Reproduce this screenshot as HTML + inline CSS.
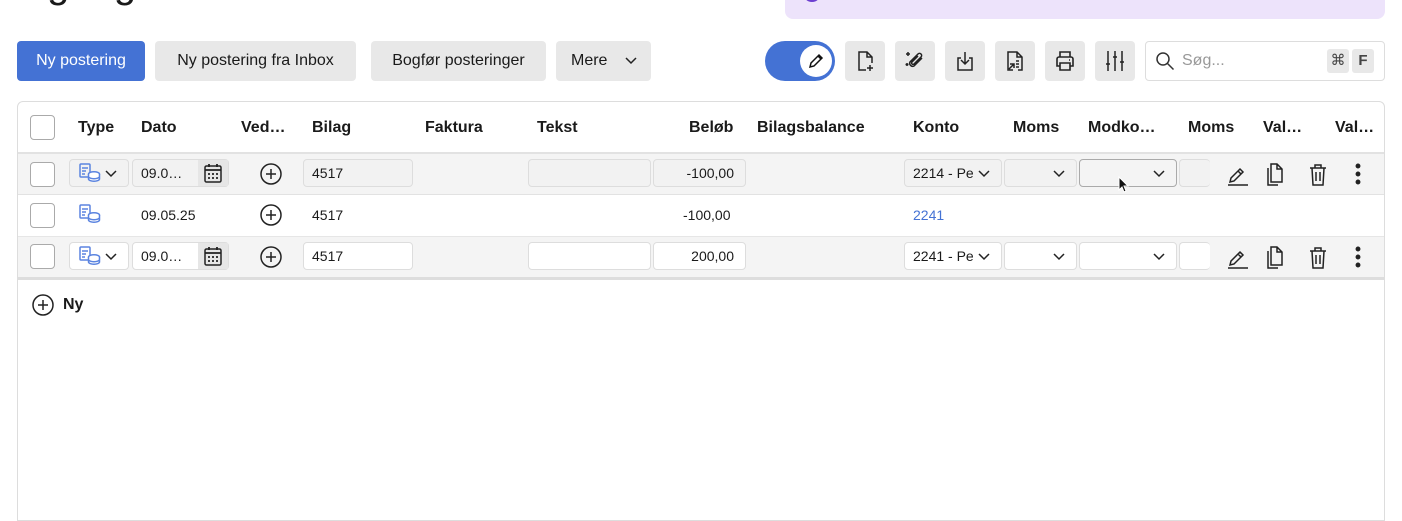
<!DOCTYPE html><html><head><meta charset="utf-8"><style>
*{box-sizing:border-box;margin:0;padding:0}
body{width:1402px;height:510px;background:#fff;font-family:"Liberation Sans",sans-serif;color:#1a1a1a;position:relative;overflow:hidden}
.a{position:absolute}
.btn{position:absolute;top:41px;height:40px;border-radius:4px;background:#e8e8e8;font-size:16px;line-height:40px;text-align:center;color:#1a1a1a}
.ib{position:absolute;top:41px;width:40px;height:40px;border-radius:4px;background:#e8e8e8}
.ib svg{position:absolute;left:8px;top:8px}
.th{position:absolute;top:119px;font-size:16px;font-weight:bold}
.in{position:absolute;height:28px;border:1px solid #ddd;border-radius:4px;font-size:14px;line-height:26px;padding-left:8px;background:#fff}
.r1 .in{background:#f2f2f2}
.cb{position:absolute;left:30px;width:25px;height:25px;border:1px solid #aaa;border-radius:4px;background:#fff}
.td{position:absolute;font-size:14px}
</style></head><body>
<div class="a" style="left:-4px;top:-38px;font-size:40px">Dagbog</div>
<div class="a" style="left:785px;top:-10px;width:600px;height:29px;background:#ede3fb;border-radius:8px"></div>
<div class="a" style="left:803px;top:-8px;width:18px;height:10px;background:#6c3fd0;border-radius:0 0 9px 9px"></div>

<div class="btn" style="left:17px;width:128px;background:#4472d4;color:#fff">Ny postering</div>
<div class="btn" style="left:155px;width:201px">Ny postering fra Inbox</div>
<div class="btn" style="left:371px;width:175px">Bogfør posteringer</div>
<div class="btn" style="left:556px;width:95px;text-align:left;padding-left:15px">Mere<svg class="a" style="left:68px;top:15px" width="14" height="10" viewBox="0 0 14 10"><path d="M2 2l5 5 5-5" fill="none" stroke="#222" stroke-width="1.5"/></svg></div>

<div class="a" style="left:765px;top:41px;width:70px;height:40px;border-radius:20px;background:#4472d4"></div>
<div class="a" style="left:800px;top:45px;width:32px;height:32px;border-radius:16px;background:#fff"></div>
<svg class="a" style="left:806px;top:51px" width="20" height="20" viewBox="0 0 20 20"><path d="M4 16l1-4 8-8 3 3-8 8z M12 5l3 3" fill="none" stroke="#111" stroke-width="1.5"/></svg>

<div class="ib" style="left:845px"><svg width="24" height="24" viewBox="0 0 24 24" fill="none" stroke="#222" stroke-width="1.5"><path d="M13 21H6V3h8l5 5v6M14 3v5h5M17 16v6M14 19h6"/></svg></div>
<div class="ib" style="left:895px"><svg width="24" height="24" viewBox="0 0 24 24" fill="none" stroke="#222" stroke-width="1.5"><path d="M19 9l-8 8a3 3 0 01-4-4l8-8a2 2 0 013 3l-7 7a1 1 0 01-2-2l6-6M5 3v4M3 5h4M4 14v3M2.5 15.5h3"/></svg></div>
<div class="ib" style="left:945px"><svg width="24" height="24" viewBox="0 0 24 24" fill="none" stroke="#222" stroke-width="1.5"><path d="M8 9H5v12h14V9h-3M12 3v12M8 11l4 4 4-4"/></svg></div>
<div class="ib" style="left:995px"><svg width="24" height="24" viewBox="0 0 24 24" fill="none" stroke="#222" stroke-width="1.5"><path d="M10 21H5V3h9l5 5v13h-4M14 3v5h5M13 12h3M13 15h3M13 18h3M6 20l5-5M7 15h4v4"/></svg></div>
<div class="ib" style="left:1045px"><svg width="24" height="24" viewBox="0 0 24 24" fill="none" stroke="#222" stroke-width="1.6"><path d="M7 8V3h10v5M7 17H4V10a2 2 0 012-2h12a2 2 0 012 2v7h-3M7 14h10v7H7zM16 11h1"/></svg></div>
<div class="ib" style="left:1095px"><svg width="24" height="24" viewBox="0 0 24 24" fill="none" stroke="#222" stroke-width="1.5"><path d="M5 2v20M12 2v20M19 2v20M3 15h4M10 8h4M17 13h4"/></svg></div>

<div class="a" style="left:1145px;top:41px;width:240px;height:40px;border:1px solid #ddd;border-radius:4px"></div>
<svg class="a" style="left:1155px;top:51px" width="20" height="20" viewBox="0 0 20 20"><circle cx="8" cy="8" r="6" fill="none" stroke="#333" stroke-width="1.5"/><path d="M12.5 12.5l6 6" stroke="#333" stroke-width="1.5"/></svg>
<div class="a" style="left:1182px;top:52px;font-size:16px;color:#999">Søg...</div>
<div class="a" style="left:1327px;top:49px;width:22px;height:24px;background:#e8e8e8;border-radius:3px;font-size:15px;line-height:24px;text-align:center;color:#444">⌘</div>
<div class="a" style="left:1352px;top:49px;width:22px;height:24px;background:#e8e8e8;border-radius:3px;font-size:15px;font-weight:bold;line-height:24px;text-align:center;color:#444">F</div>

<div class="a" style="left:17px;top:101px;width:1368px;height:420px;border:1px solid #ddd;border-radius:6px 6px 0 0"></div>
<div class="cb" style="top:115px"></div>
<div class="th" style="left:78px">Type</div><div class="th" style="left:141px">Dato</div><div class="th" style="left:241px">Ved…</div><div class="th" style="left:312px">Bilag</div><div class="th" style="left:425px">Faktura</div><div class="th" style="left:537px">Tekst</div><div class="th" style="left:689px">Beløb</div><div class="th" style="left:757px">Bilagsbalance</div><div class="th" style="left:913px">Konto</div><div class="th" style="left:1013px">Moms</div><div class="th" style="left:1088px">Modko…</div><div class="th" style="left:1188px">Moms</div><div class="th" style="left:1263px">Val…</div><div class="th" style="left:1335px">Val…</div>

<div class="a" style="left:18px;top:152px;width:1366px;height:43px;background:#f4f4f4;border-top:2px solid #e2e2e2;border-bottom:1px solid #e2e2e2"></div>
<div class="a" style="left:18px;top:236px;width:1366px;height:44px;background:#f4f4f4;border-top:1px solid #e6e6e6;border-bottom:3px solid #ddd"></div>

<div class="r1">
<div class="cb" style="top:162px"></div>
<div class="in" style="left:69px;top:159px;width:60px"></div>
<div class="in" style="left:132px;top:159px;width:97px">09.0…</div>
<div class="in" style="left:303px;top:159px;width:110px">4517</div>
<div class="in" style="left:528px;top:159px;width:123px"></div>
<div class="in" style="left:653px;top:159px;width:93px;text-align:right;padding-right:11px">-100,00</div>
<div class="in" style="left:904px;top:159px;width:98px;overflow:hidden;white-space:nowrap">2214 - Pe</div>
<div class="in" style="left:1004px;top:159px;width:73px"></div>
<div class="in" style="left:1079px;top:159px;width:98px;border-color:#aaa;background:#f4f4f4"></div>
<div class="in" style="left:1179px;top:159px;width:31px;border-right:none"></div>
</div>
<div class="cb" style="top:203px"></div>
<div class="td" style="left:141px;top:207px">09.05.25</div>
<div class="td" style="left:312px;top:207px">4517</div>
<div class="td" style="left:683px;top:207px">-100,00</div>
<div class="td" style="left:913px;top:207px;color:#4472d4">2241</div>
<div>
<div class="cb" style="top:244px"></div>
<div class="in" style="left:69px;top:242px;width:60px"></div>
<div class="in" style="left:132px;top:242px;width:97px">09.0…</div>
<div class="in" style="left:303px;top:242px;width:110px">4517</div>
<div class="in" style="left:528px;top:242px;width:123px"></div>
<div class="in" style="left:653px;top:242px;width:93px;text-align:right;padding-right:11px">200,00</div>
<div class="in" style="left:904px;top:242px;width:98px;overflow:hidden;white-space:nowrap">2241 - Pe</div>
<div class="in" style="left:1004px;top:242px;width:73px"></div>
<div class="in" style="left:1079px;top:242px;width:98px"></div>
<div class="in" style="left:1179px;top:242px;width:31px;border-right:none"></div>
</div>

<div class="a" style="left:974px;top:166px;width:25px;height:16px;background:#f2f2f2"></div>
<div class="a" style="left:974px;top:249px;width:25px;height:16px;background:#fff"></div>

<svg width="1402" height="510" class="a" style="left:0;top:0" fill="none" stroke="#222" stroke-width="1.5">
<defs>
<g id="ty"><rect x="0" y="0" width="10" height="13" rx="1" stroke="#5b84e0"/><path d="M2 4h6M2 7h4M2 10h3" stroke="#5b84e0"/><ellipse cx="14" cy="10" rx="5.5" ry="2.2" stroke="#5b84e0" fill="#fff"/><path d="M8.5 10v5c0 1.2 2.5 2.2 5.5 2.2s5.5-1 5.5-2.2V10M8.5 12.5c0 1.2 2.5 2.2 5.5 2.2s5.5-1 5.5-2.2" stroke="#5b84e0" fill="#fff"/></g>
<g id="cal"><rect x="0" y="0" width="16" height="16" rx="1.5"/><path d="M0 4h16M4 -2v3M12 -2v3M3 8h2M7 8h2M11 8h2M3 12h2M7 12h2M11 12h2" stroke-width="1.8"/></g>
<g id="pl"><circle cx="0" cy="0" r="10"/><path d="M-5 0h10M0 -5v10"/></g>
<g id="ch"><path d="M0 0l5 5 5-5"/></g>
<g id="act"><path d="M-8 8l1-4 9-9 3 3-9 9zM0 -3l3 3M-10 11h20"/><path d="M33 -10h6l5 5v13H33z M39 -10v5h5M30 -6v17h10"/><path d="M72 -6h16M77 -6v-3h6v3M74 -6l1 17h10l1-17M78 -2v9M82 -2v9"/><circle cx="120" cy="-8" r="1.7" fill="#222"/><circle cx="120" cy="0" r="1.7" fill="#222"/><circle cx="120" cy="8" r="1.7" fill="#222"/></g>
</defs>
<use href="#ty" x="80" y="164"/><use href="#ch" x="106" y="171"/>
<use href="#ty" x="80" y="205"/>
<use href="#ty" x="80" y="247"/><use href="#ch" x="106" y="254"/>
<rect x="198" y="160" width="30" height="26" fill="#e6e6e6" stroke="none"/><rect x="198" y="243" width="30" height="26" fill="#e6e6e6" stroke="none"/>
<use href="#cal" x="205" y="166"/><use href="#cal" x="205" y="249"/>
<use href="#pl" x="271" y="174"/><use href="#pl" x="271" y="215"/><use href="#pl" x="271" y="257"/>
<use href="#ch" x="979" y="171"/><use href="#ch" x="1054" y="171"/><use href="#ch" x="1154" y="171"/>
<use href="#ch" x="979" y="254"/><use href="#ch" x="1054" y="254"/><use href="#ch" x="1154" y="254"/>
<use href="#act" x="1238" y="174"/><use href="#act" x="1238" y="257"/>
<path d="M1119 177v13l3-3 2 5 2-1-2-5h4z" fill="#111" stroke="#fff" stroke-width="1"/>
<use href="#pl" x="43" y="305"/>
</svg>
<div class="a" style="left:63px;top:296px;font-size:16px;font-weight:bold">Ny</div>
</body></html>
